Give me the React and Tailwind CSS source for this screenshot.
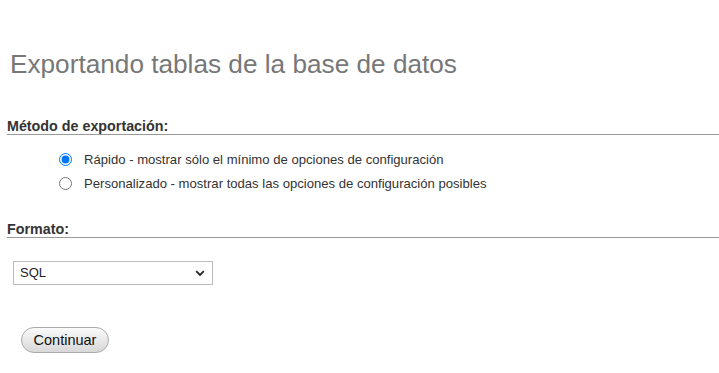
export default function App() {
  return (
    <div className="min-h-[373px] bg-white font-['Liberation_Sans',Arial,sans-serif] text-[13px] text-[#333]">
      <h2 className="pl-[10px] pt-[49px] text-[26.2px] font-normal leading-[30px] text-[#777]">
        Exportando tablas de la base de datos
      </h2>

      <div className="ml-[7px] mt-[39px] border-b border-[#999] text-[14.3px] font-bold leading-[16px] text-[#333]">
        Método de exportación:
      </div>

      <div className="mt-[18px] flex flex-col gap-[11px] pl-[59px]">
        <label className="flex items-center gap-[12px] text-[13.1px] leading-[13px]">
          <input type="radio" name="m" defaultChecked className="m-0 h-[13px] w-[13px]" />
          <span>Rápido - mostrar sólo el mínimo de opciones de configuración</span>
        </label>
        <label className="flex items-center gap-[12px] text-[13.1px] leading-[13px]">
          <input type="radio" name="m" className="m-0 h-[13px] w-[13px]" />
          <span>Personalizado - mostrar todas las opciones de configuración posibles</span>
        </label>
      </div>

      <div className="ml-[7px] mt-[31px] border-b border-[#999] text-[14.3px] font-bold leading-[16px] text-[#333]">
        Formato:
      </div>

      <div className="mt-[23px] pl-[13px]">
        <div className="flex h-[24px] w-[200px] items-center justify-between border border-[#bbb] bg-white pl-[6px] pr-[6px]">
          <span className="text-[13px] text-[#222]">SQL</span>
          <svg width="10" height="7" viewBox="0 0 10 7" className="mr-[1px]">
            <path d="M1.2 1.2 L5 5 L8.8 1.2" fill="none" stroke="#222" strokeWidth="1.8" />
          </svg>
        </div>
      </div>

      <div className="mt-[42px] pl-[21px]">
        <button className="h-[26px] w-[88px] rounded-full border border-[#aaa] bg-gradient-to-b from-[#fafafa] to-[#d8d8d8] text-[14.5px] leading-none text-[#111]">
          Continuar
        </button>
      </div>
    </div>
  );
}
